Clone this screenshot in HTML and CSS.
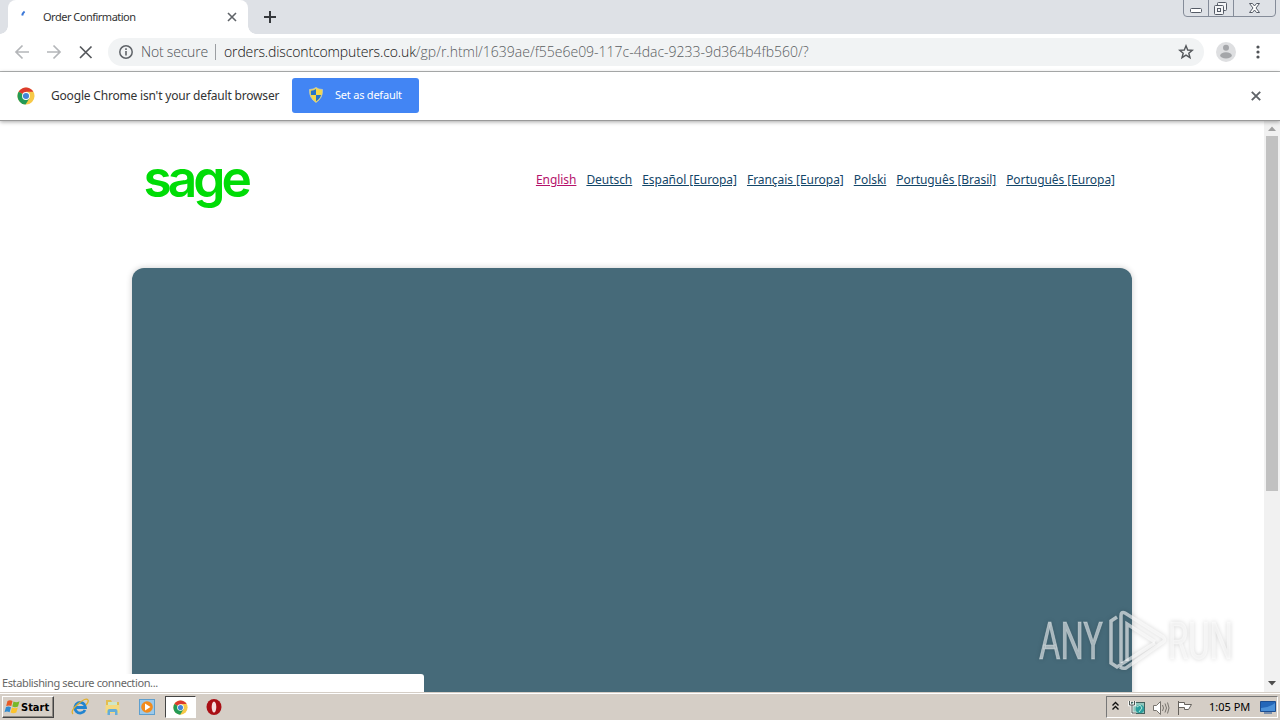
FILE: index.html
```html
<!DOCTYPE html>
<html lang="en">
<head>
  <meta charset="UTF-8" />
  <title>Order Confirmation</title>
  <link rel="stylesheet" href="styles.css">
</head>
<body>
  <svg class="defs" width="0" height="0">
    <symbol id="chrome" viewBox="0 0 20 20">
      <circle cx="10" cy="10" r="9.500" fill="#f7c948"/>
      <path d="M10 10 1.800 5.300A9.500 9.500 0 0 1 18.200 5.300H10z" fill="#dc3a2e"/>
      <path d="M1.800 5.300A9.500 9.500 0 0 0 9.500 19.500l4.500-7.200-4-2.300z" fill="#239a55"/>
      <circle cx="10" cy="10" r="4.400" fill="#fff"/>
      <circle cx="10" cy="10" r="3.400" fill="#4285d8"/>
    </symbol>
  </svg>

  <header class="tabstrip">
    <div class="tab">
      <svg class="spinner" width="16" height="16" viewBox="0 0 16 16"><path d="M6.200 7.500Q6.600 5 8.600 3.500" stroke="#3b78d8" stroke-width="2" fill="none"/></svg>
      <span class="tab-title">Order Confirmation</span>
      <svg class="tab-close" width="10" height="10" viewBox="0 0 10 10"><path d="M1 1l8 8M9 1l-8 8" stroke="#5f6368" stroke-width="1.600"/></svg>
    </div>
    <svg class="new-tab" width="12" height="12" viewBox="0 0 12 12"><path d="M6 0v12M0 6h12" stroke="#35383c" stroke-width="2"/></svg>
    <div class="window-buttons">
      <svg width="93" height="17" viewBox="0 0 93 17" fill="none" stroke="#858c99">
        <path d="M.5 0v13q0 3.500 3.500 3.500h85q3.500 0 3.500-3.500V0M25.500 0v16M50.500 0v16"/>
        <g stroke="#555b66">
          <rect x="7.500" y="8.500" width="11" height="4" rx="1" fill="#fff"/>
          <rect x="34.500" y="2.500" width="9" height="8" rx="1" fill="#f4f5f7"/>
          <rect x="31.500" y="5.500" width="9" height="9" rx="1" fill="#f4f5f7"/>
          <rect x="34.500" y="8.500" width="3" height="3"/>
          <path d="M66.500 3.500h3l2 2.500 2-2.500h3l-3.500 4.500 3.500 4.500h-3l-2-2.500-2 2.500h-3l3.500-4.500z" fill="#fff"/>
        </g>
      </svg>
    </div>
  </header>

  <nav class="toolbar">
    <svg class="nav-icons" width="81" height="16" viewBox="0 0 81 16" fill="none" stroke-width="1.700">
      <path d="M16 8H3M9.500 1.500 3 8l6.500 6.500" stroke="#b4b6b9"/>
      <path d="M34 8h13M40.500 1.500 47 8l-6.500 6.500" stroke="#b4b6b9"/>
      <path d="M67 2.500l11.500 11.500M78.500 2.500l-11.500 11.500" stroke="#55585c"/>
    </svg>
    <div class="omnibox">
      <svg width="16" height="16" viewBox="0 0 16 16"><circle cx="8" cy="8" r="6.200" fill="none" stroke="#5f6368" stroke-width="1.500"/><path d="M8 7v4.500M8 4.300v1.600" stroke="#5f6368" stroke-width="1.600"/></svg>
      <span class="security">Not secure</span>
      <span class="divider"></span>
      <span class="host">orders.discontcomputers.co.uk</span><span class="path">/gp/r.html/1639ae/f55e6e09-117c-4dac-9233-9d364b4fb560/?</span>
      <svg class="star" width="16" height="16" viewBox="0 0 16 16"><path d="M8 1.800 9.700 6l4.600.3-3.500 2.900 1.200 4.500L8 11.200l-4 2.500 1.200-4.500L1.700 6.300 6.300 6z" fill="none" stroke="#55585c" stroke-width="1.400"/></svg>
    </div>
    <svg class="avatar" width="20" height="20" viewBox="0 0 20 20"><circle cx="10" cy="10" r="10" fill="#dedfe1"/><circle cx="10" cy="5.800" r="3" fill="#a4a6a9"/><ellipse cx="10" cy="13.400" rx="5.800" ry="3.100" fill="#a4a6a9"/></svg>
    <svg class="menu" width="4" height="16" viewBox="0 0 4 16" fill="#505357"><circle cx="2" cy="3" r="1.600"/><circle cx="2" cy="8" r="1.600"/><circle cx="2" cy="13" r="1.600"/></svg>
  </nav>

  <div class="infobar">
    <svg width="18" height="18"><use href="#chrome"/></svg>
    <span class="info-text">Google Chrome isn't your default browser</span>
    <button class="default-btn">
      <svg width="14" height="16" viewBox="0 0 14 16">
        <path d="M7 .5Q9.500 2.500 13.500 2.500 14 11 7 15.500 0 11 .5 2.500 4.500 2.500 7 .5z" fill="#f5d84a"/>
        <path d="M7 2Q5 3.600 1.800 3.700L1.900 8H7zM7 8h5.100Q11 12 7 14.200z" fill="#2775c9"/>
        <path d="M7 .5Q9.500 2.500 13.500 2.500 14 11 7 15.500 0 11 .5 2.500 4.500 2.500 7 .5z" fill="none" stroke="#c6cdb2" stroke-width=".8"/>
      </svg>
      <span>Set as default</span>
    </button>
    <svg class="info-close" width="10" height="10" viewBox="0 0 10 10"><path d="M.8.8l8.400 8.400M9.200.8.8 9.200" stroke="#5f6368" stroke-width="1.900"/></svg>
  </div>

  <main class="viewport">
    <div class="page">
      <div class="page-header">
        <svg class="logo" width="120" height="60" viewBox="0 0 120 60"><text transform="translate(.5 36.500) scale(.99 1)" textLength="109.500" lengthAdjust="spacing">sage</text></svg>
        <div class="languages">
          <a class="current">English</a>
          <a>Deutsch</a>
          <a>Español [Europa]</a>
          <a>Français [Europa]</a>
          <a>Polski</a>
          <a>Português [Brasil]</a>
          <a>Português [Europa]</a>
        </div>
      </div>
      <div class="panel"></div>
    </div>
    <div class="scrollbar">
      <svg width="16" height="15" viewBox="0 0 16 15"><path d="M4 10h8L8 5.500z" fill="#a0a0a0"/></svg>
      <div class="thumb"></div>
      <svg width="16" height="17" viewBox="0 0 16 17"><path d="M4 6h8l-4 4.500z" fill="#4d4d4d"/></svg>
    </div>
    <div class="status">Establishing secure connection...</div>
    <svg class="watermark" width="216" height="76" viewBox="0 0 216 76">
      <g class="mark-text">
        <text x="5" y="54" textLength="64" lengthAdjust="spacingAndGlyphs">ANY</text>
        <text x="134" y="54" textLength="65" lengthAdjust="spacingAndGlyphs">RUN</text>
      </g>
      <g class="mark-lines">
        <path d="M83 12l-6 4v42l6 4 38-24"/>
        <path d="M87 58V11q0-5 4-3l38 24q3 3 0 5L92 63q-3 1-6-1"/>
        <path d="M93 56V19l28 18"/>
      </g>
    </svg>
  </main>

  <footer class="taskbar">
    <div class="start">
      <svg width="17" height="16" viewBox="0 0 17 16">
        <path d="M3.500 2Q6 .5 8.500 2L7.300 7Q5 5.800 2.200 7z" fill="#e85a24"/>
        <path d="M9.500 2.500q3 1.500 6-.2L14 7.500Q11 9 8.300 7.500z" fill="#76b82a"/>
        <path d="M2 8q2.500-1.200 5 .2l-1.400 5Q3 12 .5 13.200z" fill="#318bd0"/>
        <path d="M8 8.500q3 1.500 5.800 0L12.300 13.500q-3 1.500-5.700 0z" fill="#fcc32d"/>
      </svg>
      <span>Start</span>
    </div>
    <div class="launch">
      <svg width="18" height="18" viewBox="0 0 18 18">
        <path d="M14 12A5.300 5.300 0 1 1 14.500 9.500H5" fill="none" stroke="#2184d0" stroke-width="2.800"/>
        <path d="M2 16Q-1 13 7 6T17 2q1 2-2 5" fill="none" stroke="#e2b02c" stroke-width="1.300"/>
      </svg>
    </div>
    <div class="launch">
      <svg width="18" height="18" viewBox="0 0 18 18">
        <path d="M2 2h5l1 2h7v11H2z" fill="#e3bd50"/><path d="M4 4h9v4H4z" fill="#cfe7c8"/>
        <path d="M1.500 7h14v8h-14z" fill="#f5da80"/><path d="M3.500 17v-4q0-2 2-2h6q2 0 2 2v4h-2.500v-3h-5v3z" fill="#64add8"/>
      </svg>
    </div>
    <div class="launch">
      <svg width="18" height="18" viewBox="0 0 18 18">
        <rect x="1.500" y="1.500" width="15" height="15" fill="#9cc9ea" stroke="#5e9fce"/>
        <circle cx="9" cy="9" r="5.800" fill="#f28b1c"/><path d="M7 5.500v7L12.500 9z" fill="#fff"/>
      </svg>
    </div>
    <div class="launch active"><svg width="15" height="15"><use href="#chrome"/></svg></div>
    <div class="launch">
      <svg width="18" height="18" viewBox="0 0 18 18"><ellipse cx="9" cy="9" rx="7.500" ry="8" fill="#a90f15"/><ellipse cx="9" cy="9" rx="2.300" ry="5.500" fill="#f5dede"/></svg>
    </div>
    <div class="tray">
      <svg width="82" height="20" viewBox="0 0 82 20" fill="none">
        <path d="M1.500 8.500l3-3 3 3M1.500 12.500l3-3 3 3" stroke="#111" stroke-width="1.400"/>
        <rect x="20.500" y="5.500" width="13" height="11" fill="#8fc7bd" stroke="#41605d"/>
        <circle cx="29" cy="12" r="4.300" fill="#2a9f9e"/><path d="M26 10l3-2 2 3-3 4" stroke="#b9e7db"/>
        <path d="M18.500 4v4h5V4M21 8v8h4" stroke="#fff" stroke-width="2.600"/><path d="M18.500 4v4h5V4M21 8v8h4" stroke="#4d5552"/>
        <path d="M42.500 8.500h3l4-4v13l-4-4h-3z" fill="#fff" stroke="#77736d"/>
        <path d="M51.500 8q2 3 0 6M54 6.500q3 4.500 0 9M56.500 5.500q3 5.500 0 11" stroke="#77736d"/>
        <path d="M67.500 4v14M67.500 5.500h6v2h7l-3 5h-4v-2h-6" fill="#fff" stroke="#66625d"/>
      </svg>
      <span class="clock">1:05 PM</span>
      <svg class="desktop" width="16" height="16" viewBox="0 0 16 16"><path d="M.5 2.500h15v10H.5z" fill="#2467b9" stroke="#1d4e91"/><path d="M1 9Q8 9 15 4v8H1z" fill="#4c91d8"/><path d="M4 14h8" stroke="#1d4e91"/></svg>
    </div>
  </footer>
</body>
</html>
```
FILE: styles.css
```css
* { box-sizing: border-box; }
body {
  margin: 0;
  width: 1280px;
  height: 720px;
  overflow: hidden;
  display: flex;
  flex-direction: column;
  background: #fff;
  font-family: "Noto Sans", sans-serif;
  font-size: 11px;
  white-space: nowrap;
}
svg { display: block; flex: none; }
.defs { position: absolute; }

/* tabs */
.tabstrip {
  height: 34px;
  flex: none;
  display: flex;
  background: #dee1e6;
  padding-left: 8px;
}
.tab {
  position: relative;
  width: 240px;
  display: flex;
  align-items: center;
  padding: 0 11px 2px 8px;
  background: #fff;
  border-radius: 8px 8px 0 0;
}
.tab::before, .tab::after {
  content: "";
  position: absolute;
  bottom: 0;
  width: 8px;
  height: 8px;
}
.tab::before { left: -8px; background: radial-gradient(circle at 0 0, transparent 7.5px, #fff 8px); }
.tab::after { right: -8px; background: radial-gradient(circle at 100% 0, transparent 7.5px, #fff 8px); }
.tab-title {
  margin-left: 11px;
  color: #333;
  letter-spacing: -0.5px;
}
.tab-close { margin: 2px 0 0 auto; }
.new-tab { margin: 11px 0 0 16px; }
.window-buttons { margin: 0 4px 0 auto; }

/* toolbar */
.toolbar {
  height: 38px;
  flex: none;
  display: flex;
  align-items: center;
  padding: 0 20px 1px 13px;
  border-bottom: 1px solid #b3b5b5;
}
.omnibox {
  width: 1096px;
  height: 28px;
  margin-left: 14px;
  padding: 0 10px;
  display: flex;
  align-items: center;
  background: #f1f3f4;
  border-radius: 14px;
  font-family: "Open Sans", sans-serif;
  font-size: 14px;
  font-weight: 300;
  letter-spacing: -0.05px;
}
.omnibox span { padding-bottom: 1px; }
.security { width: 67px; margin-left: 7px; letter-spacing: -0.2px; color: #4d5054; }
.divider {
  width: 1px;
  height: 16px;
  margin: 0 8px 0 7px;
  background: #9b9ea2;
}
.host { color: #111; letter-spacing: -0.13px; }
.path { color: #5a5d61; letter-spacing: -0.01px; }
.star { margin-left: auto; }
.avatar { margin-left: 12px; }
.menu { margin-left: auto; }

/* default browser bar */
.infobar {
  position: relative;
  z-index: 1;
  height: 49px;
  flex: none;
  display: flex;
  align-items: center;
  padding: 0 19px 0 17px;
  background: #fff;
  border-bottom: 1px solid #999;
  box-shadow: 0 1px 4px rgba(0,0,0,0.35);
}
.info-text {
  width: 229px;
  margin: 0 0 2px 16px;
  font-size: 12px;
  letter-spacing: -0.19px;
  color: #333;
}
.default-btn {
  width: 127px;
  height: 35px;
  margin: 0 0 2px 12px;
  padding: 0 0 0 17px;
  display: flex;
  align-items: center;
  gap: 12px;
  border: none;
  border-radius: 3px;
  background: #4285f4;
  color: #fff;
  font: 11px "Noto Sans", sans-serif;
  letter-spacing: -0.22px;
}
.default-btn span { margin-bottom: 2px; }
.info-close { margin-left: auto; }

/* page */
.viewport {
  position: relative;
  flex: 1;
  min-height: 0;
  display: flex;
  overflow: hidden;
}
.page { flex: 1; padding: 39px 132px 0; }
.page-header {
  height: 108px;
  display: flex;
  align-items: flex-start;
  padding: 0 17px 0 11px;
}
.logo text {
  font-family: Inter, sans-serif;
  font-size: 52px;
  font-weight: 600;
  fill: #00dc06;
}
.languages {
  margin: 11px 0 0 auto;
  display: flex;
  gap: 10px;
  font-size: 12px;
  line-height: 17px;
  letter-spacing: -0.05px;
}
.languages a { color: #134668; text-decoration: underline; }
.languages .current { color: #b5126b; }
.panel {
  height: 500px;
  background: #466a79;
  border-radius: 12px 12px 0 0;
  box-shadow: 0 0 6px rgba(0,0,0,0.2);
}
.scrollbar {
  width: 16px;
  display: flex;
  flex-direction: column;
  background: #f1f1f1;
}
.thumb { width: 12px; height: 355px; margin: 0 auto auto; background: #c1c1c1; }
.status {
  position: absolute;
  left: 0;
  bottom: 0;
  width: 424px;
  height: 18px;
  padding-left: 2px;
  background: #fff;
  border-radius: 0 3px 0 0;
  color: #666;
  line-height: 18px;
  letter-spacing: -0.38px;
}
.watermark { position: absolute; left: 1034px; bottom: 11px; filter: drop-shadow(0 0 2px rgba(0,0,0,0.28)); }
.mark-text {
  font: 51px Roboto, sans-serif;
  fill: rgba(255,255,255,0.55);
  stroke: rgba(255,255,255,0.3);
}
.mark-lines { fill: none; stroke: rgba(255,255,255,0.6); stroke-width: 3.5; }

/* taskbar */
.taskbar {
  height: 28px;
  flex: none;
  display: flex;
  align-items: center;
  padding: 1px 2px 0;
  background: #d5cec6;
  border-top: 1px solid #d5cec6;
  box-shadow: inset 0 1px #fff;
}
.start {
  width: 52px;
  height: 22px;
  margin-right: 10px;
  display: flex;
  align-items: center;
  padding-left: 1px;
  border: 1px solid;
  border-color: #fff #444 #444 #fff;
  box-shadow: inset -1px -1px #8d8882;
  font: bold 11px "DejaVu Sans Condensed", "DejaVu Sans", sans-serif;
  color: #000;
}
.launch {
  width: 31px;
  height: 22px;
  margin-right: 2.5px;
  display: flex;
  align-items: center;
  justify-content: center;
}
.launch.active { background: #fff; border: 1px solid; border-color: #444 #fff #fff #444; }
.tray {
  width: 172px;
  height: 22px;
  margin-left: auto;
  display: flex;
  align-items: center;
  padding: 0 1px 0 4px;
  border: 1px solid;
  border-color: #777 #fff #fff #777;
}
.clock { margin: 0 0 1px 16px; color: #000; }
.desktop { margin-left: auto; }
```
